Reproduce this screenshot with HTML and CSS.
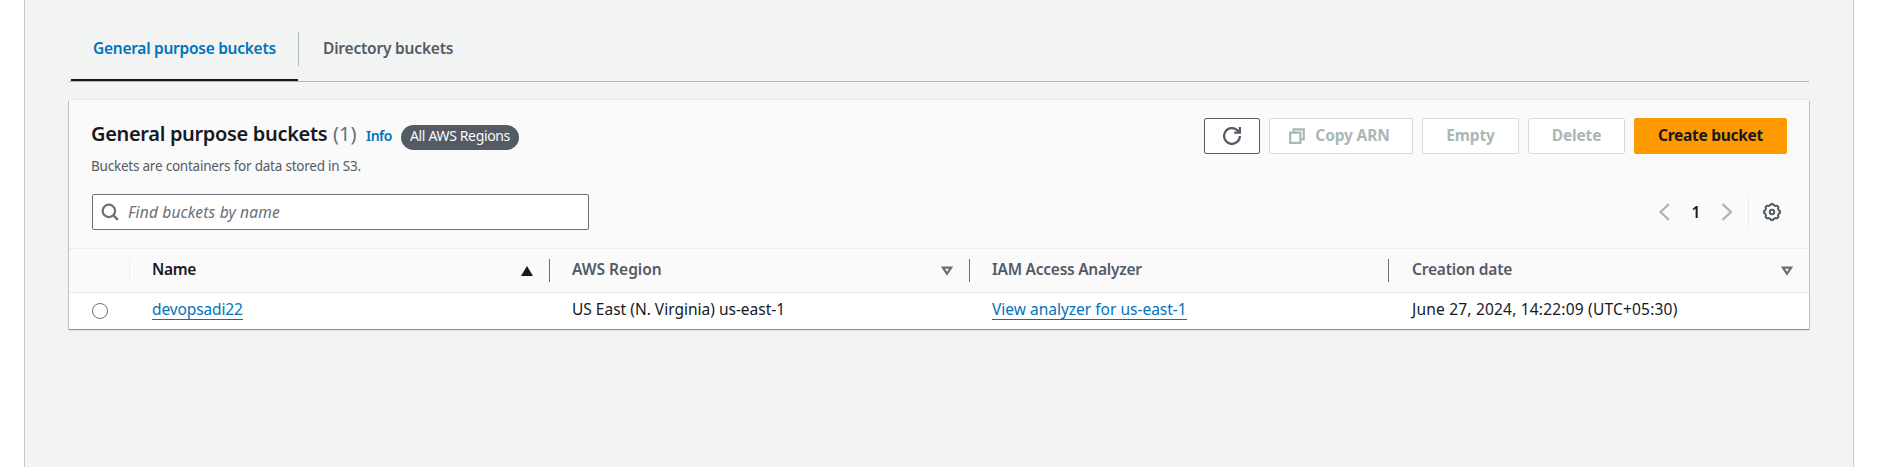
FILE: index.html
```html
<!DOCTYPE html>
<html lang="en">
<head>
<meta charset="utf-8">
<title>General purpose buckets</title>
<link rel="stylesheet" href="styles.css">
</head>
<body>
<main class="page">
  <nav class="tabs">
    <a class="tab tab-active"><span class="t-tab1">General purpose buckets</span></a>
    <a class="tab"><span class="t-tab2">Directory buckets</span></a>
  </nav>
  <section class="card">
    <header class="card-head">
      <div class="heading">
        <div class="title-row">
          <h2 class="title">General purpose buckets</h2>
          <span class="count">(1)</span>
          <a class="info">Info</a>
          <span class="badge">All AWS Regions</span>
        </div>
        <p class="desc">Buckets are containers for data stored in S3.</p>
      </div>
      <div class="actions">
        <button class="btn btn-refresh" aria-label="Refresh"><svg width="18" height="18" viewBox="0 0 16 16" fill="none" stroke="currentColor" stroke-width="2"><path d="M15 8a7 7 0 1 1-2.2-5.1L15 5"/><path d="M10 5h5V0"/></svg></button>
        <button class="btn btn-copy" disabled><svg width="18" height="18" viewBox="0 0 16 16" fill="none" stroke="currentColor" stroke-width="2"><path d="M2 5h9v9H2z"/><path d="M5 5V2h9v9h-3"/></svg><span class="t-copy">Copy ARN</span></button>
        <button class="btn btn-short" disabled><span class="t-empty">Empty</span></button>
        <button class="btn btn-short" disabled><span class="t-delete">Delete</span></button>
        <button class="btn btn-primary"><span class="t-create">Create bucket</span></button>
      </div>
    </header>
    <div class="tools">
      <div class="search">
        <svg width="18" height="18" viewBox="0 0 16 16" fill="none" stroke="currentColor" stroke-width="2"><circle cx="7" cy="7" r="5.500"/><path d="M11 11l4 4"/></svg>
        <span class="placeholder">Find buckets by name</span>
      </div>
      <div class="pager">
        <svg class="chev" width="18" height="18" viewBox="0 0 16 16" fill="none" stroke="currentColor" stroke-width="2"><path d="M11.500 1L4 8l7.500 7"/></svg>
        <span class="page-num">1</span>
        <svg class="chev" width="18" height="18" viewBox="0 0 16 16" fill="none" stroke="currentColor" stroke-width="2"><path d="M4 1l7.500 7L4 15"/></svg>
        <span class="pager-sep"></span>
        <svg class="gear" width="18" height="18" viewBox="0 0 18 18" fill="none" stroke="currentColor" stroke-width="2"><path stroke-linejoin="round" d="M7.300 2.200L8 1h2l.7 1.200 1.900.8 1.400-.4 1.400 1.400-.4 1.400.8 1.900L17 8v2l-1.200.7-.8 1.900.4 1.400-1.400 1.400-1.400-.4-1.900.8L10 17H8l-.7-1.200-1.900-.8-1.400.4L2.600 14l.4-1.400-.8-1.900L1 10V8l1.200-.7L3 5.400 2.600 4 4 2.600l1.400.4z"/><circle cx="9" cy="9" r="2.200"/></svg>
      </div>
    </div>
    <div class="row row-head">
      <div class="cell-sel"></div>
      <div class="cell cell-sorted"><span class="h-name">Name</span><svg width="12" height="10" viewBox="0 0 12 10"><path d="M6 0l6 10H0z" fill="#16191f"/></svg></div>
      <div class="cell"><span class="h-region">AWS Region</span><svg width="12" height="10" viewBox="0 0 12 10"><path d="M1.900 1.600h8.200L6 7.800z" fill="none" stroke="#687078" stroke-width="2.200"/></svg></div>
      <div class="cell"><span class="h-iam">IAM Access Analyzer</span></div>
      <div class="cell"><span class="h-date">Creation date</span><svg width="12" height="10" viewBox="0 0 12 10"><path d="M1.900 1.600h8.200L6 7.800z" fill="none" stroke="#687078" stroke-width="2.200"/></svg></div>
    </div>
    <div class="row row-body">
      <div class="cell-sel"><span class="radio"></span></div>
      <div class="cell"><a class="link c-name">devopsadi22</a></div>
      <div class="cell"><span class="c-region">US East (N. Virginia) us-east-1</span></div>
      <div class="cell"><a class="link c-iam">View analyzer for us-east-1</a></div>
      <div class="cell"><span class="c-date">June 27, 2024, 14:22:09 (UTC+05:30)</span></div>
    </div>
  </section>
</main>
</body>
</html>
```
FILE: styles.css
```css
* { box-sizing: border-box; }
body { margin: 0; background: #fff; color: #16191f; font: 15.5px/24px "Noto Sans", sans-serif; }
.page { height: 467px; margin: 0 29px 0 24px; padding: 16px 44px 0 44px; background: #f2f3f3; border: solid #c4caca; border-width: 0 1px; overflow: hidden; }
.tabs { display: flex; height: 66px; border-bottom: 1px solid #aab7b8; padding-left: 2px; }
.tab { height: 65px; padding: 20px 22px 0; font-weight: 650; color: #545b64; white-space: nowrap; }
.tab-active { width: 228px; color: #0073bb; background: linear-gradient(#aab7b8, #aab7b8) right 16px / 1px 34px no-repeat, linear-gradient(#16191f, #16191f) left bottom / 227px 2px no-repeat; }
.t-tab1 { letter-spacing: -.27px; }
.t-tab2 { letter-spacing: -.2px; }
.tab + .tab { padding-left: 24px; }
.card { margin-top: 18px; height: 229px; background: #fff; box-shadow: 0 1px 1px #879596, -1px 1px 0 #c4caca, 1px 1px 0 #c4caca, 0 -1px 0 #eaeded; }
.card-head { display: flex; justify-content: space-between; height: 94px; padding: 18px 22px 0 23px; background: #fafafa; }
.title-row { display: flex; height: 36px; white-space: nowrap; padding-top: 3px; }
.title { margin: 0 0 0 -1px; width: 235px; font-size: 20px; line-height: 26px; font-weight: 600; letter-spacing: -.33px; }
.count { width: 26px; margin-left: 7px; font-size: 20px; line-height: 26px; color: #687078; }
.info { width: 26px; margin-left: 7px; font-size: 14px; line-height: 29px; font-weight: 600; letter-spacing: -.5px; color: #0073bb; }
.badge { margin: 4px 0 0 9px; width: 118px; height: 25px; border-radius: 13px; background: #545b64; color: #fafafa; font-size: 14px; line-height: 22px; letter-spacing: -.35px; text-align: center; }
.desc { margin: 0 0 0 -1px; font-size: 13.5px; line-height: 24px; letter-spacing: -.22px; color: #545b64; }
.actions { display: flex; gap: 9px; }
.btn { display: flex; align-items: center; justify-content: center; height: 36px; padding: 0; border: 1px solid #545b64; border-radius: 2px; background: #fff; color: #545b64; font: 700 15.5px/24px "Noto Sans", sans-serif; white-space: nowrap; }
.btn span { padding-bottom: 2px; letter-spacing: -.15px; }
.btn .t-create { letter-spacing: -.27px; }
.btn:disabled { border-color: #d5dbdb; color: #aab7b8; }
.btn-refresh { width: 56px; }
.btn-copy { width: 144px; gap: 9px; }
.btn.btn-copy { padding-right: 4px; }
.btn-short { width: 97px; }
.btn-primary { width: 153px; background: #f90; border-color: #f90; color: #16191f; }
.tools { display: flex; justify-content: space-between; height: 54px; padding: 0 22px 0 23px; background: #fafafa; }
.search { display: flex; align-items: center; gap: 9px; width: 497px; height: 36px; padding-left: 8px; border: 1px solid #687078; border-radius: 2px; background: #fff; color: #687078; font-style: italic; }
.placeholder { letter-spacing: .18px; }
.pager { display: flex; align-items: center; height: 36px; color: #545b64; }
.chev { color: #aab7b8; }
.page-num { width: 44px; text-align: center; font-weight: 600; color: #16191f; }
.pager-sep { width: 1px; height: 36px; margin: 0 14px 0 12px; background: #eaeded; }
.gear { margin-right: 6px; }
.row { display: grid; grid-template-columns: 61px 420px 420px 419px 1fr; }
.row-head { height: 45px; background: #fafafa; border: solid #eaeded; border-width: 1px 0; font-weight: 650; color: #545b64; }
.row-head .cell { display: flex; justify-content: space-between; align-items: center; padding: 0 17px 0 22px; background: linear-gradient(#687078, #687078) right center / 1px 23px no-repeat; }
.row-head .cell:last-child { padding: 0 16px 0 23px; background: none; }
.row-head .cell span { padding-bottom: 3px; }
.h-name { letter-spacing: -.3px; }
.h-iam { letter-spacing: -.25px; }
.h-date { letter-spacing: -.2px; }
.row-head .cell-sel { background: linear-gradient(#eaeded, #eaeded) right center / 1px 23px no-repeat; }
.row-head .cell-sorted { color: #16191f; }
.row-body { height: 36px; }
.row-body .cell { padding: 4px 0 0 22px; white-space: nowrap; }
.row-body .cell:last-child { padding-left: 23px; }
.row-body .cell-sel { padding: 10px 0 0 23px; }
.radio { display: block; width: 16px; height: 16px; border: 1px solid #687078; border-radius: 50%; background: #fff; }
.link { display: inline-block; height: 23px; border-bottom: 1px solid #0073bb; color: #0073bb; line-height: 24px; }
.c-name { letter-spacing: -.12px; }
.c-date { letter-spacing: .2px; }
```
